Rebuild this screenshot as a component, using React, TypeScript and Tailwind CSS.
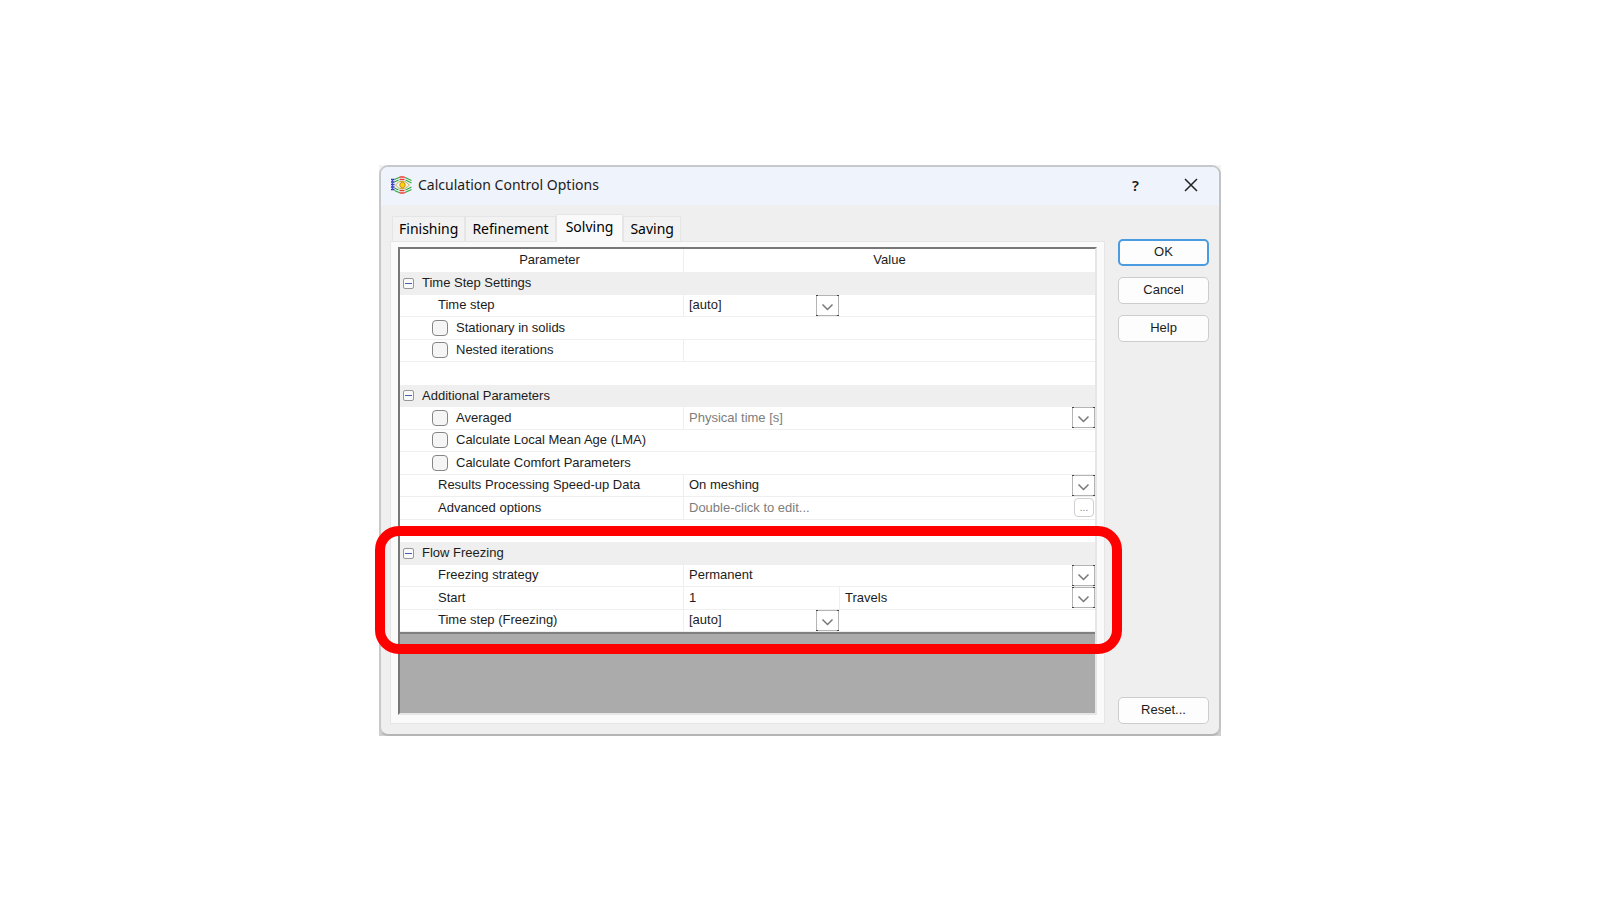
import { useState, type ReactNode } from "react";

const tabs = ["Finishing", "Refinement", "Solving", "Saving"];

/* flow lines bending around a yellow core: blue inlet, green sides, red crest */
function AppIcon() {
  return (
    <svg className="h-[18px] w-[21px]" viewBox="0 0 21 18" fill="none" strokeWidth="1.300">
      <path d="M0 3.500h3.500M0 6h3.500M0 8.500h3.500M0 11h3.500M0 13.500h3.500" stroke="#2f2fc0" />
      <path d="M1.500 3v11" stroke="#4b4bd0" strokeWidth="1" />
      <g stroke="#2fae3f">
        <path d="M3.500 3.500 8 1.500M14 1.500l6.500 3M3.500 14.500 8 16.500M14 16.500l6.500-3" />
        <path d="M3.500 6 7.500 4M14.500 4l6 3M3.500 12l4 2M14.500 14l6-3" />
      </g>
      <g stroke="#ea4034">
        <path d="M8 1.500 9.500 1h3l1.500.5M8 16.500l1.500.5h3l1.500-.5" />
        <path d="M8.500 3.500h5M8.500 14.500h5" />
      </g>
      <path d="M4.500 9 7.500 6.200 9 5.500h4.500L15 6.200 18.500 9 15 11.800l-1.500.7H9l-1.500-.7Z" stroke="#c8b432" strokeWidth="1" />
      <circle cx="11.500" cy="9" r="2.700" fill="#ffd60a" stroke="#d08a10" strokeWidth="1" />
    </svg>
  );
}

function DropArrow() {
  return (
    <svg className="pointer-events-none absolute top-0 right-0 h-[21px] w-[23px]" viewBox="0 0 23 21" fill="none">
      <rect x="0.500" y="0.500" width="22" height="20" fill="#fff" stroke="#b4b4b4" />
      <path d="M6.500 9.500l5 5 5-5" stroke="#777" strokeWidth="1.500" />
      <path d="M0 0h2v1H0zM21 0h2v1h-2zM0 20h2v1H0zM21 20h2v1h-2z" fill="#444" />
    </svg>
  );
}

function Drop({ id, value, label, disabled }: { id?: string; value: string; label?: string; disabled?: boolean }) {
  return (
    <div className="relative h-[21px]">
      <select
        id={id}
        aria-label={label}
        disabled={disabled}
        className="block h-[21px] w-full appearance-none bg-transparent pl-[5px] outline-none disabled:text-[#7d7d7d] disabled:opacity-100"
      >
        <option>{value}</option>
      </select>
      <DropArrow />
    </div>
  );
}

const line = "border-b border-[#efefef] p-0";
const split = "border-b border-l border-[#efefef] p-0";

function Section({ title }: { title: string }) {
  return (
    <tr className="h-[22px] bg-[#efefef] odd:h-[23px]">
      <th colSpan={3} scope="colgroup" className="p-0 text-left font-normal">
        <div className="flex items-center gap-[8px] pl-[3px]">
          <button
            type="button"
            aria-label={`Collapse ${title}`}
            className="flex size-[11px] items-center justify-center rounded-[2px] border border-[#979797] bg-[#fafafa]"
          >
            <span className="h-px w-[7px] bg-[#4560b0]" />
          </button>
          {title}
        </div>
      </th>
    </tr>
  );
}

function Blank() {
  return (
    <tr className="h-[22px] odd:h-[23px]">
      <td colSpan={3} className="p-0" />
    </tr>
  );
}

function Row({ id, name, children }: { id: string; name: string; children: ReactNode }) {
  return (
    <tr className="h-[22px] odd:h-[23px]">
      <td className={line}>
        <label htmlFor={id} className="block pl-[38px]">{name}</label>
      </td>
      {children}
    </tr>
  );
}

function CheckRow({ name, wide, children }: { name: string; wide?: boolean; children?: ReactNode }) {
  return (
    <tr className="h-[22px] odd:h-[23px]">
      <td colSpan={wide ? 3 : 1} className={line}>
        <label className="flex items-center gap-2 pl-[32px]">
          <input
            type="checkbox"
            className="size-4 appearance-none rounded-[4px] border border-[#868686] bg-[#f5f5f5] checked:bg-[#0067c0]"
          />
          {name}
        </label>
      </td>
      {children}
    </tr>
  );
}

function ParameterTable() {
  return (
    <table className="w-full table-fixed border-separate border-spacing-0 bg-white">
      <colgroup>
        <col className="w-[283px]" />
        <col className="w-[156px]" />
        <col />
      </colgroup>
      <thead>
        <tr className="h-[23px]">
          <th scope="col" className="p-0 pl-4 font-normal">Parameter</th>
          <th scope="col" colSpan={2} className="border-l border-[#efefef] p-0 font-normal">Value</th>
        </tr>
      </thead>
      <tbody>
        <Section title="Time Step Settings" />
        <Row id="time-step" name="Time step">
          <td className={split}><Drop id="time-step" value="[auto]" /></td>
          <td className={line} />
        </Row>
        <CheckRow name="Stationary in solids" wide />
        <CheckRow name="Nested iterations">
          <td colSpan={2} className={split} />
        </CheckRow>
        <Blank />
        <Section title="Additional Parameters" />
        <CheckRow name="Averaged">
          <td colSpan={2} className={split}><Drop label="Averaged over" value="Physical time [s]" disabled /></td>
        </CheckRow>
        <CheckRow name="Calculate Local Mean Age (LMA)" wide />
        <CheckRow name="Calculate Comfort Parameters" wide />
        <Row id="speed-up" name="Results Processing Speed-up Data">
          <td colSpan={2} className={split}><Drop id="speed-up" value="On meshing" /></td>
        </Row>
        <Row id="advanced" name="Advanced options">
          <td colSpan={2} className={split}>
            <div className="flex items-center justify-between pr-px pl-[5px] text-[#7d7d7d]">
              Double-click to edit...
              <button
                id="advanced"
                type="button"
                className="flex h-[19px] w-5 items-center justify-center rounded-[4px] border border-[#cfcfcf] bg-white text-[10px] leading-none text-[#6d8593]"
              >
                ...
              </button>
            </div>
          </td>
        </Row>
        <Blank />
        <Section title="Flow Freezing" />
        <Row id="strategy" name="Freezing strategy">
          <td colSpan={2} className={split}><Drop id="strategy" value="Permanent" /></td>
        </Row>
        <Row id="start" name="Start">
          <td className={split}>
            <input id="start" type="text" defaultValue="1" className="block w-full bg-transparent pl-[5px] outline-none" />
          </td>
          <td className={split}><Drop label="Start units" value="Travels" /></td>
        </Row>
        <Row id="time-step-freezing" name="Time step (Freezing)">
          <td className={split}><Drop id="time-step-freezing" value="[auto]" /></td>
          <td className={line} />
        </Row>
      </tbody>
    </table>
  );
}

const button = "h-[27px] rounded-[5px] bg-[#fdfdfd]";

export default function App() {
  const [active, setActive] = useState("Solving");

  return (
    <main className="flex min-h-screen items-center justify-center bg-white font-['Liberation_Sans',Arial,sans-serif] text-[13px] leading-[20px] text-[#1c1c1c]">
      <div className="w-full max-w-[842px] bg-linear-to-b from-[#f4f4f4] to-[#cfcfcf]">
        <section
          role="dialog"
          aria-labelledby="dialog-title"
          className="relative rounded-[9px] border-2 border-t-[#c6c8cc] border-r-[#c2c2c2] border-b-[#b5b5b5] border-l-[#c8c8c8] bg-[#efefef]"
        >
          <header className="flex h-[38px] items-center rounded-t-[7px] bg-[#eff3fb] pr-[21px] pb-[2px] pl-[10px]">
            <AppIcon />
            <h1 id="dialog-title" className="ml-[6px] flex-1 font-['Noto_Sans',sans-serif] text-[14px]">
              Calculation Control Options
            </h1>
            <button type="button" aria-label="Help" className="mr-[45px] font-['Noto_Sans',sans-serif] text-[15px] font-semibold">
              ?
            </button>
            <button type="button" aria-label="Close">
              <svg className="size-[14px]" viewBox="0 0 14 14" stroke="#222" strokeWidth="1.500">
                <path d="M1 1l12 12M13 1L1 13" />
              </svg>
            </button>
          </header>

          <div className="flex gap-[13px] pt-[9px] pr-[10px] pb-[10px] pl-[9px]">
            <div className="min-w-0 flex-1">
              <div role="tablist" className="flex items-end pl-[2px] font-['Noto_Sans',sans-serif] text-[14px] text-black">
                {tabs.map((tab) => (
                  <button
                    key={tab}
                    type="button"
                    role="tab"
                    aria-selected={tab === active}
                    onClick={() => setActive(tab)}
                    className={
                      tab === active
                        ? "z-10 -mb-px h-[28px] border border-b-0 border-[#e5e5e5] bg-[#fafafa] px-[9px] pb-[2px]"
                        : "h-[25px] border border-b-0 border-[#e5e5e5] bg-[#f2f2f2] px-[6px]"
                    }
                  >
                    {tab}
                  </button>
                ))}
              </div>
              <div role="tabpanel" className="border border-[#e5e5e5] bg-[#fafafa] px-[7px] pt-[5px] pb-[8px]">
                <div className="border-2 border-t-[#777] border-r-[#e6e6e6] border-b-[#e6e6e6] border-l-[#777] bg-[#ababab]">
                  <ParameterTable />
                  <div className="h-[81px] border-t-2 border-[#808080]" />
                </div>
              </div>
            </div>

            <div className="flex w-[91px] flex-col gap-[11px] pt-[25px]">
              <button type="button" className={`${button} border-2 border-[#4a9be0]`}>OK</button>
              <button type="button" className={`${button} border border-[#cdcdcd]`}>Cancel</button>
              <button type="button" className={`${button} border border-[#cdcdcd]`}>Help</button>
              <button type="button" className={`${button} mt-auto border border-[#cdcdcd]`}>Reset...</button>
            </div>
          </div>

          {/* highlight around the Flow Freezing group */}
          <div className="pointer-events-none absolute top-[359px] right-[97px] bottom-[80px] -left-[6px] z-20 rounded-[24px] border-10 border-[#f00]" />
        </section>
      </div>
    </main>
  );
}
